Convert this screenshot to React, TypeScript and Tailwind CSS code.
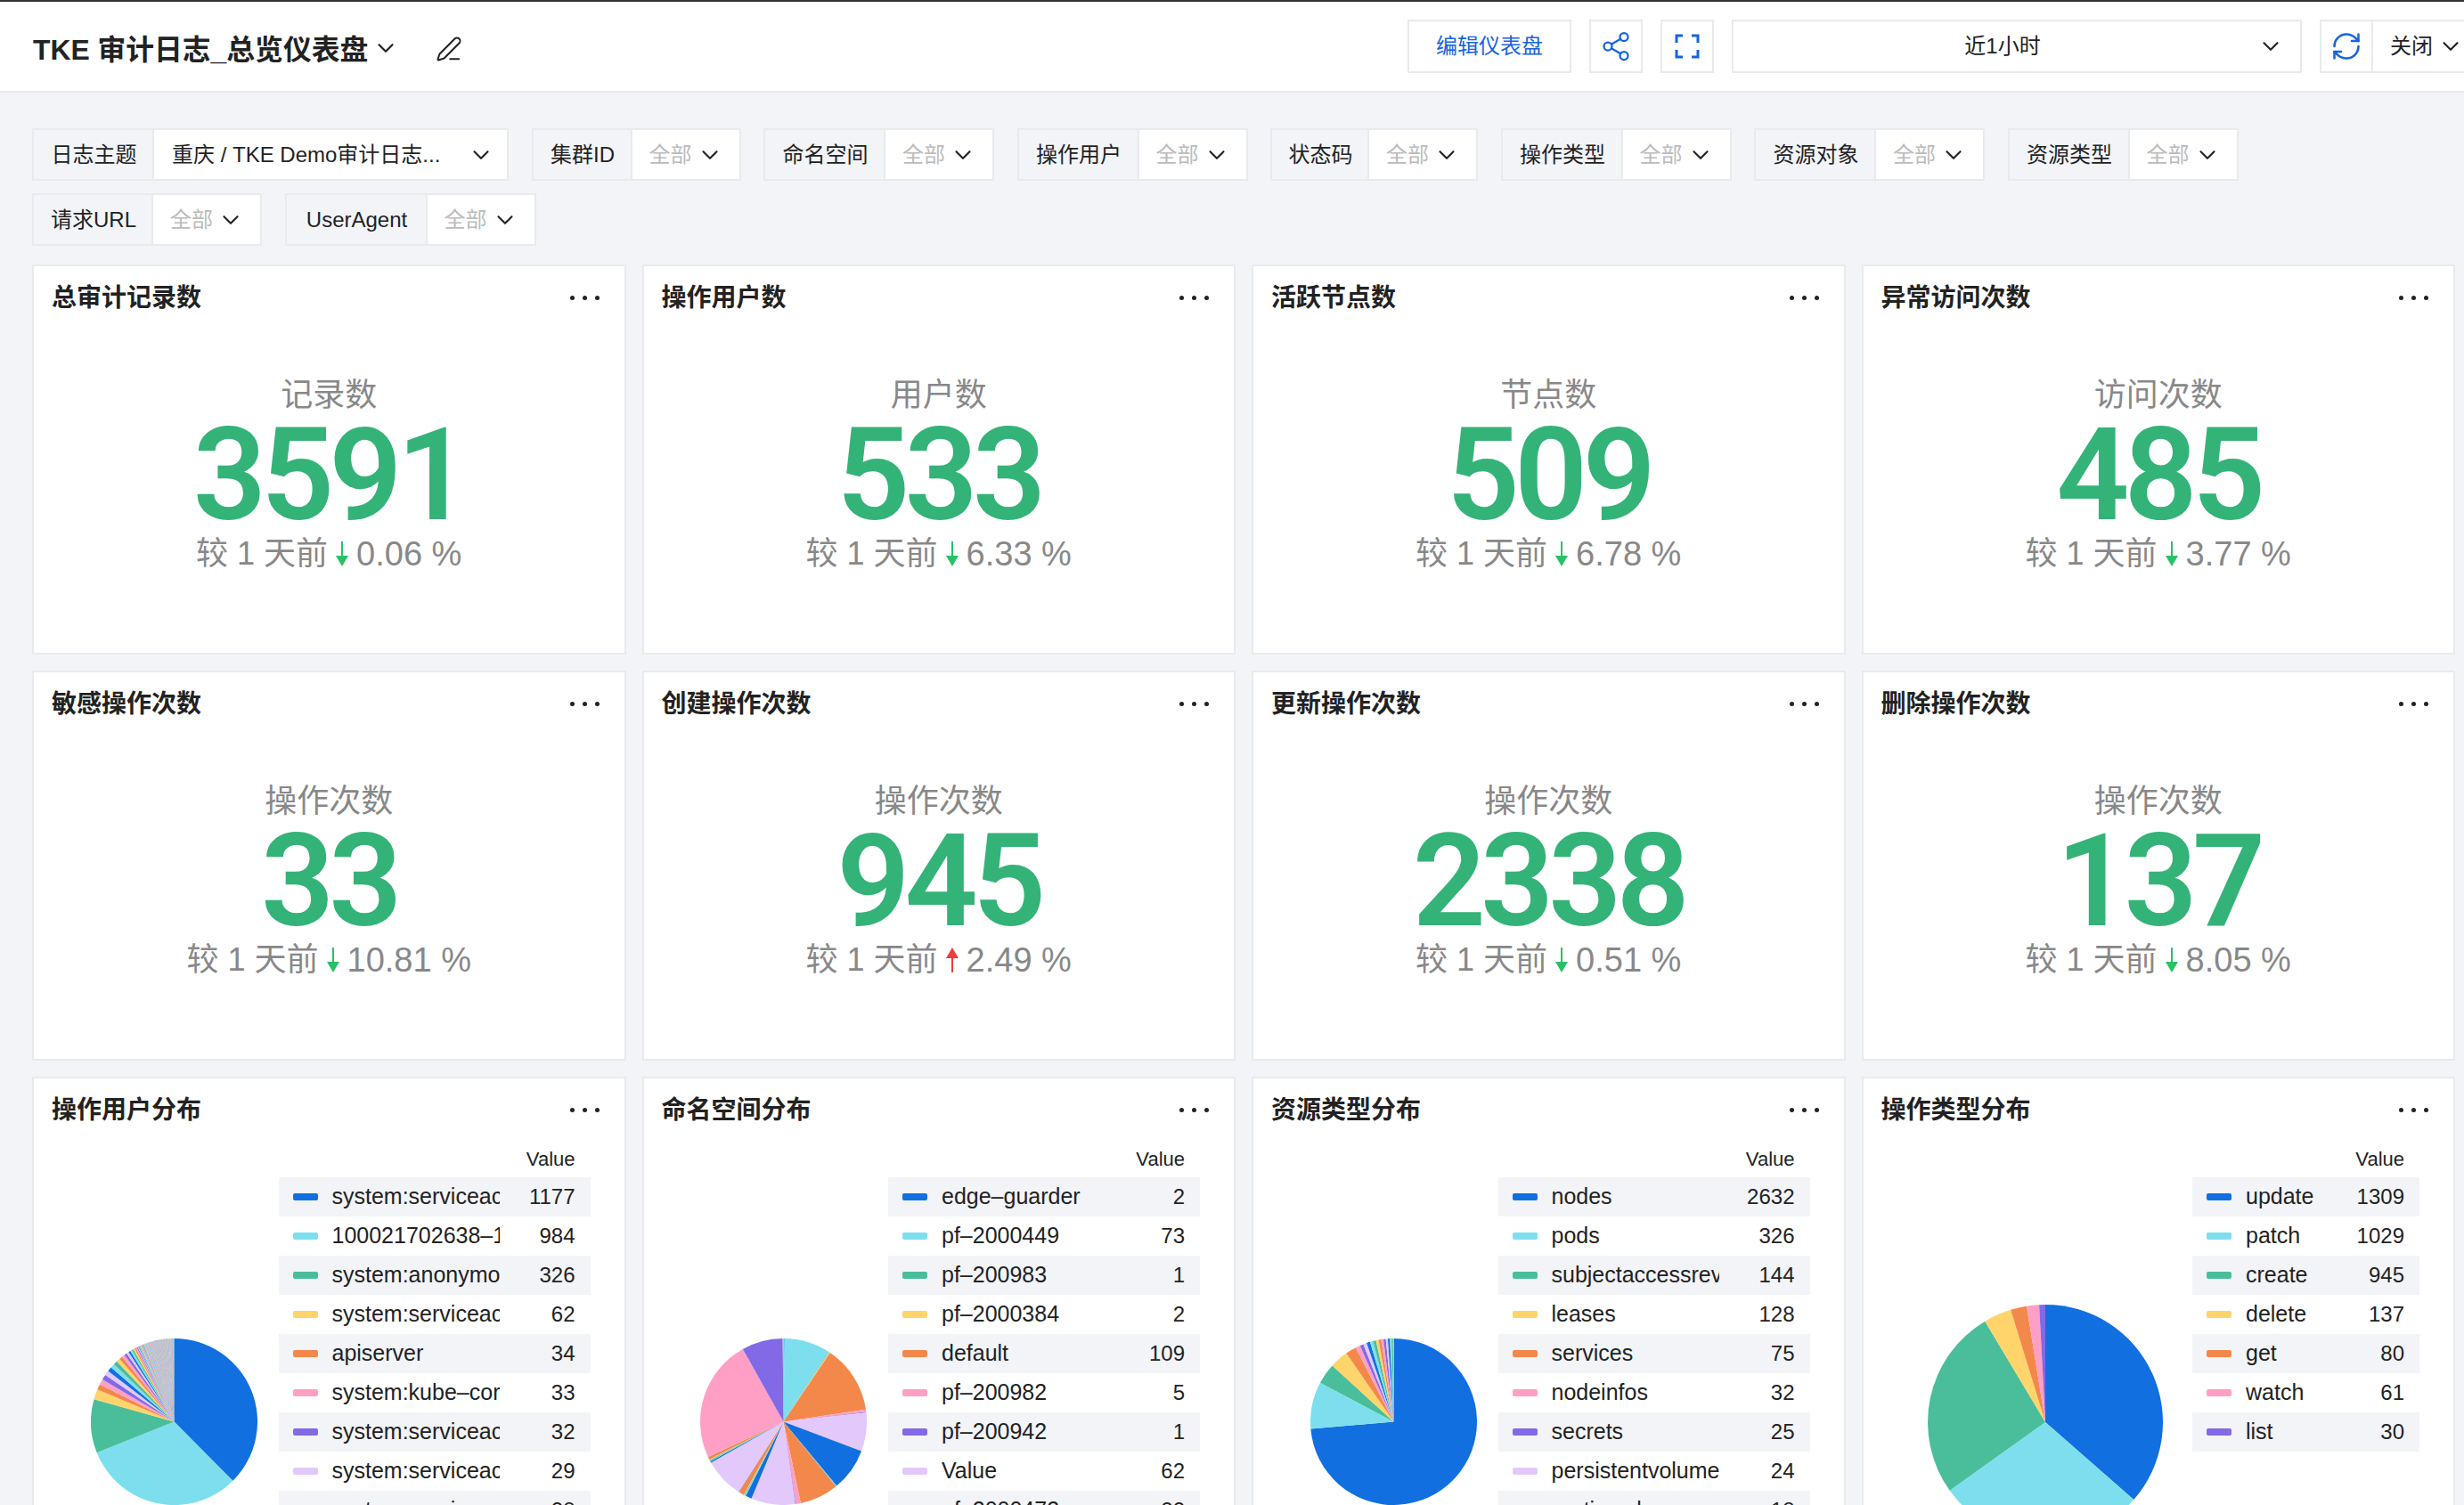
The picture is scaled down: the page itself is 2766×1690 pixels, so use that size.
import { ChevronDown, PenLine, RefreshCw, Share2 } from 'lucide-react';

const BLUE = '#116fe0';
const CYAN = '#7ddfee';
const GREEN = '#4abe9b';
const YELLOW = '#ffd46b';
const ORANGE = '#f3884b';
const PINK = '#ff9fc6';
const PURPLE = '#8269e5';
const LILAC = '#e3c9fb';
const PALETTE = [BLUE, CYAN, GREEN, YELLOW, ORANGE, PINK, PURPLE, LILAC];

type Slice = { end: number; color: string };

// values -> cumulative angle, colours cycle through the palette
const fromValues = (values: number[]): Slice[] => {
  const total = values.reduce((a, b) => a + b, 0);
  let sum = 0;
  return values.map((v, i) => {
    sum += v;
    return { end: (sum / total) * 360, color: PALETTE[i % PALETTE.length] };
  });
};

const userTail = [
  28, 26, 24, 22, 20, 18, 16, 14, 12, 11, 10, 9, 8, 7, 6, 5, 4, 4, 4, 4, 3, 3, 3, 3, 3, 3, 3, 3, 2, 2, 2, 2, 2, 2, 2, 2,
  2, 2, 2, 2, 2, 2,
];
const userPie = fromValues([
  1177, 984, 326, 62, 34, 33, 32, 29,
  ...userTail,
  ...Array.from({ length: 153 }, () => 1),
]);

const namespacePie: Slice[] = [
  { end: 0.7, color: BLUE },
  { end: 33, color: CYAN },
  { end: 33.4, color: GREEN },
  { end: 34, color: YELLOW },
  { end: 81.6, color: ORANGE },
  { end: 83.3, color: PINK },
  { end: 83.7, color: PURPLE },
  { end: 110.6, color: LILAC },
  { end: 140.3, color: BLUE },
  { end: 140.7, color: CYAN },
  { end: 141, color: GREEN },
  { end: 168, color: ORANGE },
  { end: 171.6, color: PINK },
  { end: 172, color: PURPLE },
  { end: 202.6, color: LILAC },
  { end: 207, color: BLUE },
  { end: 207.6, color: CYAN },
  { end: 208.2, color: GREEN },
  { end: 208.5, color: YELLOW },
  { end: 212.2, color: ORANGE },
  { end: 212.6, color: PURPLE },
  { end: 240.5, color: LILAC },
  { end: 241.5, color: BLUE },
  { end: 241.9, color: CYAN },
  { end: 242.6, color: GREEN },
  { end: 243, color: YELLOW },
  { end: 245, color: ORANGE },
  { end: 330.8, color: PINK },
  { end: 359.5, color: PURPLE },
  { end: 360, color: LILAC },
];

const resourcePie = fromValues([2632, 326, 144, 128, 75, 32, 25, 24, 24, 22, 20, 18, 18, 16, 16, 14, 14, 12, 10, 4]);
const actionPie = fromValues([1309, 1029, 945, 137, 80, 61, 30]);

const PieChart = ({ slices, r, className }: { slices: Slice[]; r: number; className: string }) => {
  const point = (deg: number) => {
    const a = (deg * Math.PI) / 180;
    return `${r + r * Math.sin(a)} ${r - r * Math.cos(a)}`;
  };
  let start = 0;
  return (
    <svg width={r * 2} height={r * 2} viewBox={`0 0 ${r * 2} ${r * 2}`} className={className}>
      {slices.map((s, i) => {
        const large = s.end - start > 180 ? 1 : 0;
        const d = `M${r} ${r}L${point(start)}A${r} ${r} 0 ${large} 1 ${point(s.end)}Z`;
        start = s.end;
        return <path key={i} d={d} fill={s.color} />;
      })}
    </svg>
  );
};

const Chevron = ({ className = 'text-[#222]' }: { className?: string }) => (
  <ChevronDown size={30} strokeWidth={1.7} className={`shrink-0 ${className}`} />
);

const Filter = ({ label, labelWidth, value, valueWidth }: { label: string; labelWidth: string; value?: string; valueWidth?: string }) => (
  <div className="flex h-[59px] border-2 border-[#e7eaef] text-[24px]">
    <div className={`flex items-center justify-center border-r-2 border-[#e7eaef] pl-[2px] text-[#222] ${labelWidth}`}>{label}</div>
    {value ? (
      <div className={`flex items-center justify-between bg-white pl-[20px] pr-[14px] text-[#222] ${valueWidth}`}>
        <span className="whitespace-nowrap">{value}</span>
        <Chevron />
      </div>
    ) : (
      <div className="flex w-[120px] items-center gap-[5px] bg-white pl-[19px] text-[#bbbbbb]">
        <span>全部</span>
        <Chevron />
      </div>
    )}
  </div>
);

const CardHeader = ({ title }: { title: string }) => (
  <div className="flex h-[70px] items-center justify-between pl-[20px] pr-[28px]">
    <span className="pt-[2px] text-[28px] font-semibold text-[#222]">{title}</span>
    <div className="flex gap-[9px]">
      <span className="h-[5px] w-[5px] rounded-full bg-[#222]" />
      <span className="h-[5px] w-[5px] rounded-full bg-[#222]" />
      <span className="h-[5px] w-[5px] rounded-full bg-[#222]" />
    </div>
  </div>
);

const Arrow = ({ up }: { up?: boolean }) => (
  <svg width="16" height="28" viewBox="0 0 16 28" className={`mx-[8px] ${up ? 'rotate-180' : ''}`}>
    <path d="M8 0v18" stroke={up ? '#ef3b3b' : '#27c267'} strokeWidth="2" />
    <path d="M1 16h14l-7 12z" fill={up ? '#ef3b3b' : '#27c267'} />
  </svg>
);

const StatCard = ({ title, label, value, pct, up }: { title: string; label: string; value: string; pct: string; up?: boolean }) => (
  <div className="h-[438px] border-2 border-[#e7eaef] bg-white">
    <CardHeader title={title} />
    <div className="flex flex-col items-center pt-[51px]">
      <div className="text-[36px] leading-[48px] text-[#888888]">{label}</div>
      <div className="font-['Roboto',sans-serif] text-[144px] font-semibold leading-[132px] tracking-[-6px] text-[#34b378]">{value}</div>
      <div className="-mt-[2px] flex items-center text-[36px] leading-[48px] text-[#888888]">
        <span className="whitespace-pre">较 1 天前</span>
        <Arrow up={up} />
        <span className="whitespace-pre text-[38px]">{pct} %</span>
      </div>
    </div>
  </div>
);

const PieCard = ({
  title,
  rows,
  slices,
  r = 93.5,
  pieClass = 'mt-[222px]',
  tableClass = 'w-[350px]',
}: {
  title: string;
  rows: [string, number][];
  slices: Slice[];
  r?: number;
  pieClass?: string;
  tableClass?: string;
}) => (
  <div className="h-[520px] border-2 border-[#e7eaef] bg-white">
    <CardHeader title={title} />
    <div className="flex pr-[38px]">
      <div className="flex flex-1 items-start justify-center pl-[40px]">
        <PieChart slices={slices} r={r} className={pieClass} />
      </div>
      <div className={tableClass}>
        <div className="flex h-[41px] items-center justify-end pr-[17px] text-[22px] text-[#222]">Value</div>
        {rows.map(([name, val], i) => (
          <div key={i} className={`flex h-[44px] items-center pl-[16px] text-[#222] ${i % 2 === 0 ? 'bg-[#f2f4f8]' : ''}`}>
            <span className="mr-[16px] h-[8px] w-[28px] shrink-0 rounded-[2px]" style={{ backgroundColor: PALETTE[i % 8] }} />
            <span className="flex-1 overflow-hidden whitespace-nowrap text-[25px]">{name}</span>
            <span className="w-[102px] shrink-0 pr-[17px] text-right text-[24px]">{val}</span>
          </div>
        ))}
      </div>
    </div>
  </div>
);

const stats = [
  { title: '总审计记录数', label: '记录数', value: '3591', pct: '0.06' },
  { title: '操作用户数', label: '用户数', value: '533', pct: '6.33' },
  { title: '活跃节点数', label: '节点数', value: '509', pct: '6.78' },
  { title: '异常访问次数', label: '访问次数', value: '485', pct: '3.77' },
  { title: '敏感操作次数', label: '操作次数', value: '33', pct: '10.81' },
  { title: '创建操作次数', label: '操作次数', value: '945', pct: '2.49', up: true },
  { title: '更新操作次数', label: '操作次数', value: '2338', pct: '0.51' },
  { title: '删除操作次数', label: '操作次数', value: '137', pct: '8.05' },
];

const App = () => {
  return (
    <div className="h-[1690px] w-[2766px] overflow-hidden bg-[#f2f4f8] font-['Liberation_Sans','Noto_Sans_CJK_SC',sans-serif]">
      {/* Header */}
      <div className="flex h-[104px] items-center border-t-2 border-b-2 border-t-[#333] border-b-[#e7eaef] bg-white pl-[37px]">
        <div className="flex items-center pt-[10px]">
          <span className="text-[31.8px] font-bold text-[#222]">TKE 审计日志_总览仪表盘</span>
          <ChevronDown size={30} strokeWidth={1.8} className="ml-[5px] -mt-[6px] text-[#222]" />
          <PenLine size={30} strokeWidth={1.6} className="ml-[41px] -mt-[4px] text-[#222]" />
        </div>
        <div className="ml-auto -mr-[4px] flex shrink-0 items-center gap-[20px] text-[24px]">
          <div className="flex h-[60px] w-[184px] items-center justify-center border-2 border-[#e7eaef] text-[#1664e0]">编辑仪表盘</div>
          <div className="flex h-[60px] w-[60px] items-center justify-center border-2 border-[#e7eaef]">
            <Share2 size={36} strokeWidth={1.5} className="text-[#1664e0]" />
          </div>
          <div className="flex h-[60px] w-[60px] items-center justify-center border-2 border-[#e7eaef]">
            <svg width="28" height="28" viewBox="0 0 28 28" fill="none" stroke="#1664e0" strokeWidth="3">
              <path d="M9 2H2v8M19 2h7v8M9 26H2v-8M19 26h7v-8" />
            </svg>
          </div>
          <div className="relative flex h-[60px] w-[640px] items-center justify-center border-2 border-[#e7eaef] pr-[32px] text-[#222]">
            近1小时
            <Chevron className="absolute right-[18px] text-[#222]" />
          </div>
          <div className="flex h-[60px] w-[166px] border-2 border-[#e7eaef] text-[#222]">
            <div className="flex w-[58px] items-center justify-center border-r-2 border-[#e7eaef]">
              <RefreshCw size={36} strokeWidth={1.7} className="text-[#1664e0]" />
            </div>
            <div className="flex items-center gap-[5px] pl-[19px]">
              关闭
              <Chevron />
            </div>
          </div>
        </div>
      </div>

      {/* Filters */}
      <div className="flex flex-wrap gap-x-[25.5px] gap-y-[14px] pl-[36px] pt-[40px]">
        <Filter label="日志主题" labelWidth="w-[135px]" value="重庆 / TKE Demo审计日志..." valueWidth="w-[396px]" />
        <Filter label="集群ID" labelWidth="w-[111px]" />
        <Filter label="命名空间" labelWidth="w-[135px]" />
        <Filter label="操作用户" labelWidth="w-[135px]" />
        <Filter label="状态码" labelWidth="w-[109px]" />
        <Filter label="操作类型" labelWidth="w-[135px]" />
        <Filter label="资源对象" labelWidth="w-[135px]" />
        <Filter label="资源类型" labelWidth="w-[135px]" />
        <Filter label="请求URL" labelWidth="w-[134px]" />
        <Filter label="UserAgent" labelWidth="w-[158px]" />
      </div>

      {/* Panels */}
      <div className="ml-[36px] mt-[21px] grid w-[2720px] grid-cols-4 gap-x-[18px] gap-y-[18px]">
        {stats.map((s) => (
          <StatCard key={s.title} {...s} />
        ))}
        <PieCard
          title="操作用户分布"
          slices={userPie}
          rows={[
            ['system:serviceac', 1177],
            ['100021702638–1', 984],
            ['system:anonymo', 326],
            ['system:serviceac', 62],
            ['apiserver', 34],
            ['system:kube–cor', 33],
            ['system:serviceac', 32],
            ['system:serviceac', 29],
            ['system:serviceac', 28],
          ]}
        />
        <PieCard
          title="命名空间分布"
          slices={namespacePie}
          rows={[
            ['edge–guarder', 2],
            ['pf–2000449', 73],
            ['pf–200983', 1],
            ['pf–2000384', 2],
            ['default', 109],
            ['pf–200982', 5],
            ['pf–200942', 1],
            ['Value', 62],
            ['pf–2000472', 22],
          ]}
        />
        <PieCard
          title="资源类型分布"
          slices={resourcePie}
          rows={[
            ['nodes', 2632],
            ['pods', 326],
            ['subjectaccessrev', 144],
            ['leases', 128],
            ['services', 75],
            ['nodeinfos', 32],
            ['secrets', 25],
            ['persistentvolume', 24],
            ['runtimeclasses', 18],
          ]}
        />
        <PieCard
          title="操作类型分布"
          slices={actionPie}
          r={132}
          pieClass="mt-[184px]"
          tableClass="w-[255px]"
          rows={[
            ['update', 1309],
            ['patch', 1029],
            ['create', 945],
            ['delete', 137],
            ['get', 80],
            ['watch', 61],
            ['list', 30],
          ]}
        />
      </div>
    </div>
  );
};

export default App;
